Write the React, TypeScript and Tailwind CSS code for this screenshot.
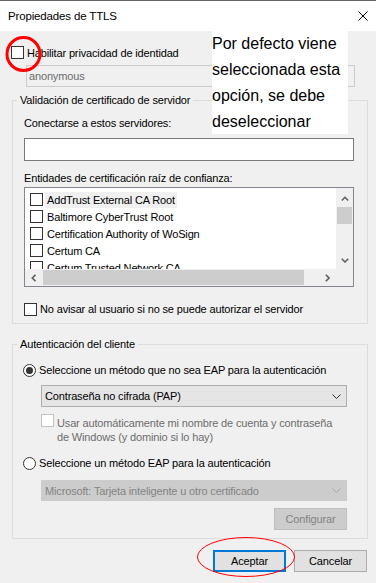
import React from "react";

function Box({ disabled }: { disabled?: boolean }) {
  return (
    <span
      className={
        disabled
          ? "block w-[13px] h-[13px] shrink-0 border border-[#c4c4c4] bg-white"
          : "block w-[13px] h-[13px] shrink-0 border border-[#333333] bg-white"
      }
    />
  );
}

function Radio({ checked }: { checked?: boolean }) {
  return (
    <span className="w-[13px] h-[13px] shrink-0 rounded-full border border-[#333333] bg-white flex items-center justify-center">
      {checked ? <span className="w-[7px] h-[7px] rounded-full bg-[#333333]" /> : null}
    </span>
  );
}

function ComboChevron({ color }: { color: string }) {
  return (
    <svg width="9" height="5" viewBox="0 0 9 5">
      <path d="M0.5 0.5 L4.5 4.5 L8.5 0.5" fill="none" stroke={color} strokeWidth="1" />
    </svg>
  );
}

function ScrollChevron({ dir }: { dir: "up" | "down" | "left" | "right" }) {
  const d =
    dir === "up"
      ? "M0.8 4.5 L4 1.3 L7.2 4.5"
      : dir === "down"
      ? "M0.8 0.8 L4 4 L7.2 0.8"
      : dir === "left"
      ? "M4.5 0.8 L1.3 4 L4.5 7.2"
      : "M0.8 0.8 L4 4 L0.8 7.2";
  const horiz = dir === "up" || dir === "down";
  return (
    <svg width={horiz ? 8 : 5.5} height={horiz ? 5.5 : 8} viewBox={horiz ? "0 0 8 5.5" : "0 0 5.5 8"}>
      <path d={d} fill="none" stroke="#606060" strokeWidth="1.6" />
    </svg>
  );
}

const items = [
  "AddTrust External CA Root",
  "Baltimore CyberTrust Root",
  "Certification Authority of WoSign",
  "Certum CA",
  "Certum Trusted Network CA",
];

export default function App() {
  return (
    <div className="relative w-[376px] h-[583px] overflow-hidden bg-[#f0f0f0] text-black font-['Liberation_Sans',Arial,sans-serif] text-[11px] leading-[14px] tracking-[-0.15px]">
      {/* Title bar */}
      <div className="h-[31px] border-t border-[#646464] bg-white flex items-center justify-between pl-[8px] pr-[8px] pb-[1px]">
        <span className="text-[11.5px]">Propiedades de TTLS</span>
        <svg width="10" height="10" viewBox="0 0 10 10">
          <path d="M0.5 0.5 L9.5 9.5 M9.5 0.5 L0.5 9.5" stroke="#000" strokeWidth="1" />
        </svg>
      </div>

      {/* Identity privacy */}
      <div className="mt-[15px] ml-[11px] h-[13px] flex items-center">
        <Box />
        <span className="ml-[3px]">Habilitar privacidad de identidad</span>
      </div>
      <div className="mt-[6px] ml-[26px] w-[329px] h-[22px] border border-[#cccccc] flex items-center pl-[2px] text-[#6d6d6d]">
        anonymous
      </div>

      {/* Group 1 */}
      <fieldset className="mt-[6px] ml-[12px] mr-[8px] border border-[#dcdcdc] pb-[7px]">
        <legend className="ml-[4px] px-[3px] leading-[14px]">Validación de certificado de servidor</legend>
        <div className="pl-[11px]">
          <div className="mt-[9px]">Conectarse a estos servidores:</div>
          <div className="mt-[8px] w-[330px] h-[23px] border border-[#7a7a7a] bg-white" />
          <div className="mt-[10px]">Entidades de certificación raíz de confianza:</div>
          <div className="mt-[2px] w-[330px] h-[100px] border border-[#828790] bg-white flex flex-col">
            <div className="flex flex-1 min-h-0">
              <div className="flex-1 overflow-hidden pt-[3px]">
                {items.map((t, i) => (
                  <div key={t} className="h-[17px] flex items-center pl-[5px]">
                    <Box />
                    <span
                      className={
                        i === 0
                          ? "ml-[2px] px-[2px] h-[16px] flex items-center whitespace-nowrap bg-[#f0f0f0]"
                          : "ml-[2px] px-[2px] h-[16px] flex items-center whitespace-nowrap"
                      }
                    >
                      {t}
                    </span>
                  </div>
                ))}
              </div>
              <div className="w-[17px] bg-[#f0f0f0] flex flex-col">
                <div className="h-[18px] flex items-center justify-center pt-[4px]">
                  <ScrollChevron dir="up" />
                </div>
                <div className="mt-[1px] mx-[1px] h-[17px] bg-[#cdcdcd]" />
                <div className="flex-1" />
                <div className="h-[17px] flex items-center justify-center">
                  <ScrollChevron dir="down" />
                </div>
              </div>
            </div>
            <div className="h-[17px] flex bg-[#f0f0f0]">
              <div className="w-[17px] flex items-center justify-center">
                <ScrollChevron dir="left" />
              </div>
              <div className="ml-[1px] w-[261px] my-[1px] bg-[#cdcdcd]" />
              <div className="flex-1" />
              <div className="w-[17px] flex items-center justify-center">
                <ScrollChevron dir="right" />
              </div>
              <div className="w-[17px]" />
            </div>
          </div>
          <div className="mt-[15px] h-[14px] flex items-center">
            <Box />
            <span className="ml-[3px]">No avisar al usuario si no se puede autorizar el servidor</span>
          </div>
        </div>
      </fieldset>

      {/* Group 2 */}
      <fieldset className="mt-[13px] ml-[12px] mr-[8px] border border-[#dcdcdc] pb-[8px]">
        <legend className="ml-[4px] px-[3px] leading-[14px]">Autenticación del cliente</legend>
        <div className="pl-[10px] pr-[20px] flex flex-col">
          <div className="mt-[12px] h-[14px] flex items-center">
            <Radio checked />
            <span className="ml-[3px]">Seleccione un método que no sea EAP para la autenticación</span>
          </div>
          <div className="mt-[8px] ml-[18px] h-[22px] border border-[#adadad] bg-[#e5e5e5] flex items-center justify-between pl-[3px] pr-[5px]">
            <span>Contraseña no cifrada (PAP)</span>
            <ComboChevron color="#333333" />
          </div>
          <div className="mt-[7px] ml-[18px] flex items-start">
            <Box disabled />
            <div className="ml-[3px] mt-[2px] text-[#6d6d6d]">
              Usar automáticamente mi nombre de cuenta y contraseña
              <br />
              de Windows (y dominio si lo hay)
            </div>
          </div>
          <div className="mt-[12px] h-[14px] flex items-center">
            <Radio />
            <span className="ml-[3px]">Seleccione un método EAP para la autenticación</span>
          </div>
          <div className="mt-[10px] ml-[18px] h-[21px] border border-[#cccccc] bg-[#cccccc] flex items-center justify-between pl-[3px] pr-[5px] text-[#838383]">
            <span>Microsoft: Tarjeta inteligente u otro certificado</span>
            <ComboChevron color="#a6a6a6" />
          </div>
          <div className="mt-[7px] self-end w-[73px] h-[22px] border border-[#bfbfbf] bg-[#cccccc] flex items-center justify-center text-[#838383]">
            Configurar
          </div>
        </div>
      </fieldset>

      {/* Buttons */}
      <div className="mt-[11px] pr-[9px] flex justify-end gap-[8px]">
        <button className="w-[73px] h-[22px] bg-[#e1e1e1] border-2 border-[#0078d7] flex items-center justify-center">
          Aceptar
        </button>
        <button className="w-[73px] h-[22px] bg-[#e1e1e1] border border-[#adadad] flex items-center justify-center">
          Cancelar
        </button>
      </div>

      {/* Annotation note */}
      <div className="absolute left-[212px] top-[31px] w-[136px] h-[103px] bg-white text-[16px] leading-[26px] tracking-normal whitespace-nowrap font-['Liberation_Sans',Arial,sans-serif]">
        Por defecto viene
        <br />
        seleccionada esta
        <br />
        opción, se debe
        <br />
        deseleccionar
      </div>

      {/* Red marks */}
      <svg className="absolute left-0 top-0 pointer-events-none" width="376" height="583" viewBox="0 0 376 583">
        <circle cx="23.5" cy="54" r="16.5" fill="none" stroke="#ff0000" strokeWidth="3" />
        <ellipse cx="246" cy="557" rx="48.5" ry="19.5" fill="none" stroke="#ff0000" strokeWidth="1" />
      </svg>
    </div>
  );
}
